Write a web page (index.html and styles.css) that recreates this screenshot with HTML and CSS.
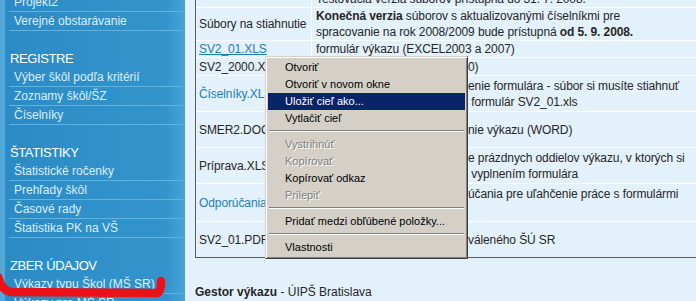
FILE: index.html
```html
<!DOCTYPE html>
<html lang="sk">
<head>
<meta charset="utf-8">
<title>Výkazy typu Škol (MŠ SR)</title>
<link rel="stylesheet" href="styles.css">
</head>
<body>
<div class="page">
  <nav class="sidebar">
    <ul class="side-list">
      <li>Projekt2</li>
      <li>Verejné obstarávanie</li>
    </ul>
    <h3 class="group">REGISTRE</h3>
    <ul class="side-list">
      <li>Výber škôl podľa kritérií</li>
      <li>Zoznamy škôl/ŠZ</li>
      <li>Číselníky</li>
    </ul>
    <h3 class="group">ŠTATISTIKY</h3>
    <ul class="side-list">
      <li>Štatistické ročenky</li>
      <li>Prehľady škôl</li>
      <li>Časové rady</li>
      <li>Štatistika PK na VŠ</li>
    </ul>
    <h3 class="group">ZBER ÚDAJOV</h3>
    <ul class="side-list">
      <li>Výkazy typu Škol (MŠ SR)</li>
      <li>Výkazy pre MŠ SR</li>
    </ul>
  </nav>
  <main class="content">
    <table class="files">
      <tr>
        <td class="name"></td>
        <td class="desc">Testovacia verzia súborov prístupná do 31. 7. 2008.</td>
      </tr>
      <tr>
        <td class="name">Súbory na stiahnutie</td>
        <td class="desc"><b>Konečná verzia</b> súborov s aktualizovanými číselníkmi pre<br>spracovanie na rok 2008/2009 bude prístupná <b>od 5. 9. 2008.</b></td>
      </tr>
      <tr>
        <td class="name"><a class="link hover">SV2_01.XLS</a></td>
        <td class="desc">formulár výkazu (EXCEL2003 a 2007)</td>
      </tr>
      <tr class="h17">
        <td class="name">SV2_2000.XLS</td>
        <td class="desc"><span class="under">formulár výkazu (EXCEL200</span>0)</td>
      </tr>
      <tr class="tall">
        <td class="name"><a class="link">Číselníky.XLS</a></td>
        <td class="desc"><span class="under">Číselníky potrebné na vypln</span>enie formulára - súbor si musíte stiahnuť<br><span class="under">do toho istého adresára ako</span> formulár SV2_01.xls</td>
      </tr>
      <tr class="tall">
        <td class="name">SMER2.DOC</td>
        <td class="desc"><span class="under">Metodické pokyny na vyplne</span>nie výkazu (WORD)</td>
      </tr>
      <tr class="tall">
        <td class="name">Príprava.XLS</td>
        <td class="desc"><span class="under">Súbor na vytlačeni</span>e prázdnych oddielov výkazu, v ktorých si<br><span class="under">môžete pripraviť údaje pred</span> vyplnením formulára</td>
      </tr>
      <tr class="tall">
        <td class="name"><a class="link">Odporúčania.DOC</a></td>
        <td class="desc top"><span class="under">Metodické pokyny a odpor</span>účania pre uľahčenie práce s formulármi</td>
      </tr>
      <tr class="tall last">
        <td class="name">SV2_01.PDF</td>
        <td class="desc"><span class="under">Vzor výkazu vo formáte PDF sch</span>váleného ŠÚ SR</td>
      </tr>
    </table>
    <p class="gestor"><b>Gestor výkazu</b> - ÚIPŠ Bratislava</p>
  </main>
</div>

<svg class="marker" width="175" height="31" viewBox="0 0 175 31" aria-hidden="true">
  <path d="M -2 7 Q 2 21 11 22 L 157 23 Q 161 23 161 11" fill="none" stroke="#ea1218" stroke-width="8.5" stroke-linecap="round" stroke-linejoin="round"/>
</svg>

<div class="ctx">
  <div class="ctx-item">Otvoriť</div>
  <div class="ctx-item">Otvoriť v novom okne</div>
  <div class="ctx-item active">Uložiť cieľ ako...</div>
  <div class="ctx-item">Vytlačiť cieľ</div>
  <div class="ctx-sep"></div>
  <div class="ctx-item disabled">Vystrihnúť</div>
  <div class="ctx-item disabled">Kopírovať</div>
  <div class="ctx-item">Kopírovať odkaz</div>
  <div class="ctx-item disabled">Prilepiť</div>
  <div class="ctx-sep"></div>
  <div class="ctx-item">Pridať medzi obľúbené položky...</div>
  <div class="ctx-sep"></div>
  <div class="ctx-item">Vlastnosti</div>
</div>
</body>
</html>
```
FILE: styles.css
```css
html, body {
  margin: 0;
  padding: 0;
  width: 696px;
  height: 301px;
  overflow: hidden;
  background: #e3f1fb;
}

body {
  position: relative;
  font-family: "Liberation Sans", Arial, sans-serif;
  font-size: 12px;
  color: #262626;
}

.page {
  display: flex;
  align-items: flex-start;
}

/* ---------- sidebar ---------- */
.sidebar {
  flex: none;
  width: 185px;
  height: 330px;
  margin-top: -7px;
  background: linear-gradient(to right, #52a8da 0, #52a8da 5px, #2c8bc5 5px, #3394cc 90%, #4aa3d7 100%);
}

.side-list {
  list-style: none;
  margin: 0;
  padding: 0 2px 0 9px;
}

.side-list li {
  height: 18px;
  line-height: 18px;
  padding-left: 5px;
  border-bottom: 1px solid #62b2df;
  color: #dbeefa;
  white-space: nowrap;
}

.group {
  margin: 19px 0 0;
  height: 18px;
  line-height: 18px;
  padding-left: 10px;
  font-size: 13px;
  font-weight: normal;
  letter-spacing: -0.4px;
  color: #ffffff;
}

/* ---------- content ---------- */
.content {
  flex: none;
  margin: -9px 0 0 10px;
}

.files {
  border-collapse: separate;
  border-spacing: 0;
  border-left: 1px solid #5b5b5b;
  border-bottom: 1px solid #5b5b5b;
  letter-spacing: -0.1px;
}

.files td {
  padding: 0;
  line-height: 16px;
  vertical-align: middle;
  white-space: nowrap;
  border-bottom: 1px solid #ffffff;
}

.files tr.last td {
  border-bottom: none;
}

.files td.name {
  width: 112px;
  min-width: 112px;
  max-width: 112px;
  padding-left: 3px;
  border-right: 1px solid #ffffff;
}

.files td.desc {
  width: 420px;
  padding-left: 4px;
}

.files td.top {
  vertical-align: top;
  padding-top: 2px;
}

.files tr.h17 td {
  height: 17px;
}

.files tr.tall td {
  height: 35px;
}

.under {
  display: inline-block;
  width: 152px;
  overflow: hidden;
  white-space: nowrap;
  vertical-align: top;
}

.link {
  color: #1f7db5;
  text-decoration: none;
}

.link.hover {
  text-decoration: underline;
}

.gestor {
  margin: 26px 0 0;
  line-height: 16px;
  color: #262626;
}

/* ---------- annotation marker ---------- */
.marker {
  position: absolute;
  left: 0;
  top: 270px;
}

/* ---------- context menu ---------- */
.ctx {
  position: absolute;
  left: 265px;
  top: 56px;
  width: 197px;
  padding: 2px;
  background: #d4d0c8;
  border: 1px solid;
  border-color: #d4d0c8 #404040 #404040 #d4d0c8;
  box-shadow: inset 1px 1px 0 #ffffff, inset -1px -1px 0 #808080;
  font-family: "Liberation Sans", Arial, sans-serif;
  font-size: 11px;
  color: #000000;
}

.ctx-item {
  height: 17px;
  line-height: 17px;
  padding-left: 17px;
  white-space: nowrap;
}

.ctx-item.active {
  background: #0a246a;
  color: #ffffff;
}

.ctx-item.disabled {
  color: #808080;
  text-shadow: 1px 1px 0 #ffffff;
}

.ctx-sep {
  margin: 3px 1px 4px;
  border-top: 1px solid #808080;
  border-bottom: 1px solid #ffffff;
}
```
